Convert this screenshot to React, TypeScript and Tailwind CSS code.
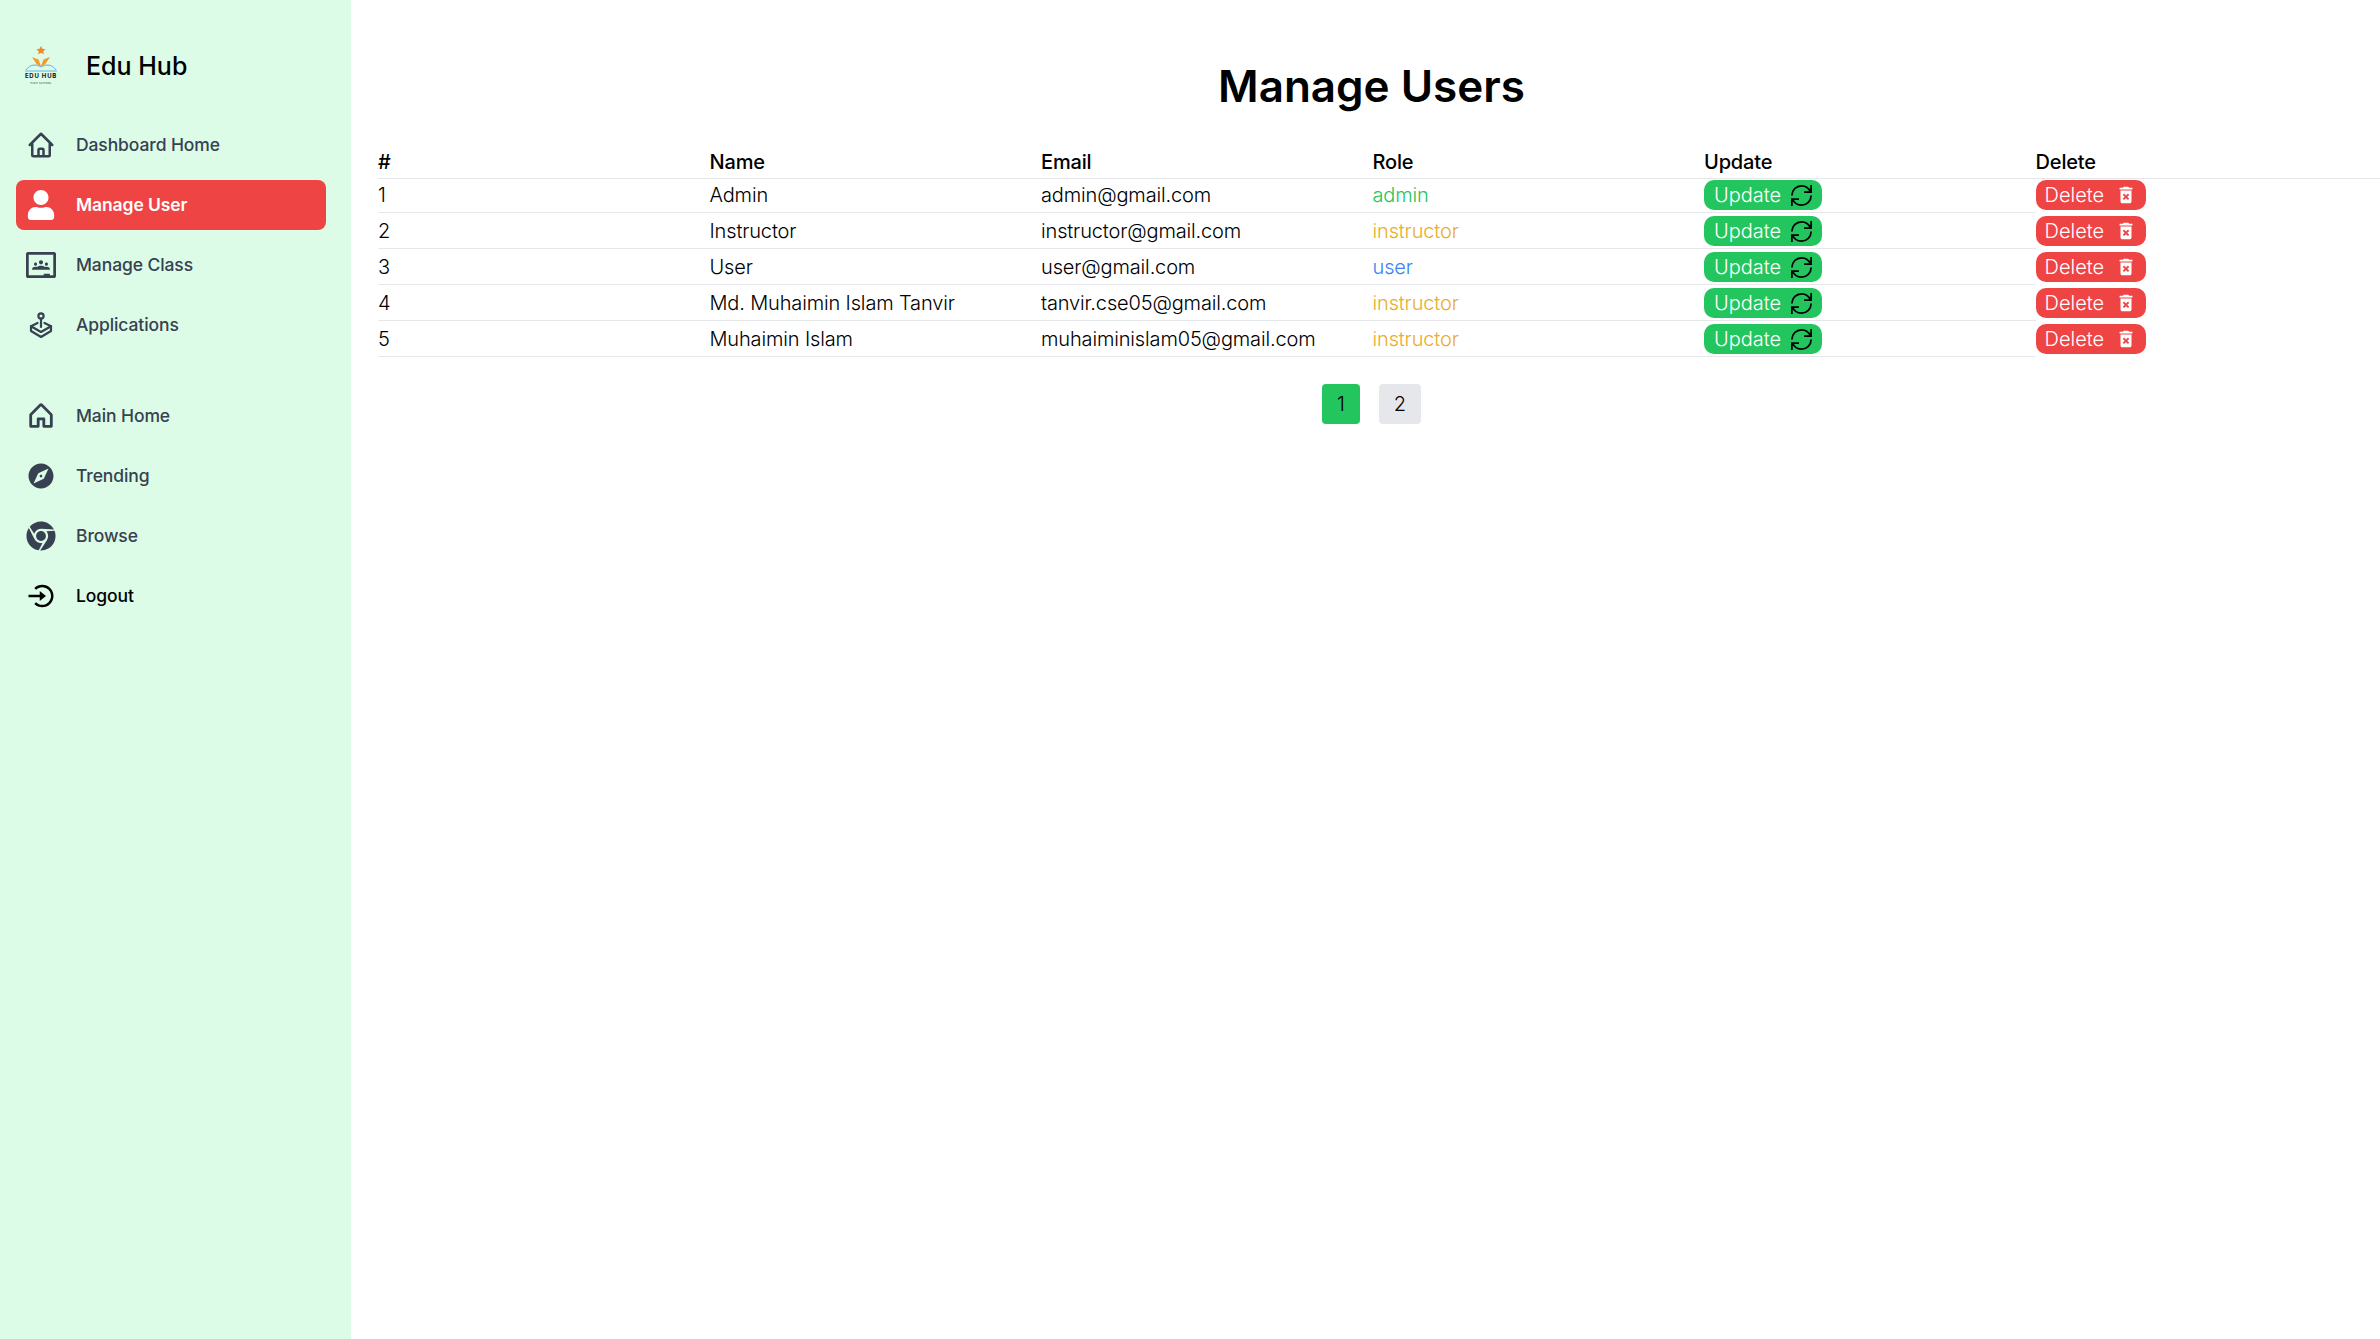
import { FaChrome, FaUser } from "react-icons/fa";
import { SiGoogleclassroom } from "react-icons/si";
import { PiHouseBold } from "react-icons/pi";
import { MdDeleteForever, MdExplore } from "react-icons/md";
import { HiOutlineHome } from "react-icons/hi";
import { BiLogInCircle } from "react-icons/bi";
import { GrUpdate } from "react-icons/gr";
import type { ReactNode } from "react";

const users = [
  { name: "Admin", email: "admin@gmail.com", role: "admin" },
  { name: "Instructor", email: "instructor@gmail.com", role: "instructor" },
  { name: "User", email: "user@gmail.com", role: "user" },
  { name: "Md. Muhaimin Islam Tanvir", email: "tanvir.cse05@gmail.com", role: "instructor" },
  { name: "Muhaimin Islam", email: "muhaiminislam05@gmail.com", role: "instructor" },
];

const roleColor: Record<string, string> = {
  admin: "text-[#22c55e]",
  instructor: "text-[#e9ad2b]",
  user: "text-[#3b82f6]",
};

function Logo() {
  return (
    <svg viewBox="0 0 38 40" className="w-[38px] h-[40px] shrink-0">
      <path d="M19 0l1.4 2.8 3.1.4-2.2 2.1.5 3-2.8-1.5-2.8 1.5.5-3-2.2-2.1 3.1-.4z" fill="#f08a24" />
      <path d="M10 11l6.5 2.5L19 20l2.5-6.5L28 11l-4.5 7-4.5 3-4.5-3z" fill="#f59a2e" />
      <path d="M4 24c4-6 10-6 15-3 5-3 11-3 15 3" fill="none" stroke="#5aa9e6" strokeWidth="0.9" />
      <path d="M6 21.5c4-3 9-3 13-1 4-2 9-2 13 1" fill="none" stroke="#8cc5ee" strokeWidth="0.6" />
      <path d="M3 25h32" stroke="#5aa9e6" strokeWidth="0.9" />
      <text x="19" y="31.5" textAnchor="middle" fontSize="6" fontWeight="700" letterSpacing="0.8" fill="#111" fontFamily="Inter, sans-serif">EDU HUB</text>
      <text x="19" y="37.5" textAnchor="middle" fontSize="2.6" fill="#333" letterSpacing="0.3" fontFamily="Inter, sans-serif">HIGH SCHOOL</text>
    </svg>
  );
}

// joystick on an isometric base, no package has this exact one
function Joystick() {
  return (
    <svg viewBox="0 0 30 30" className="w-[30px] h-[30px]" fill="none" stroke="currentColor" strokeWidth="2.2" strokeLinejoin="round" strokeLinecap="round">
      <circle cx="15" cy="6" r="2.6" />
      <path d="M15 8.6V17" />
      <path d="M11.5 13L5 16.2V21L15 27L25 21V16.2L18.5 13" />
      <path d="M5 16.2L15 22L25 16.2" />
    </svg>
  );
}

function NavItem({ icon, label, active, dark }: { icon: ReactNode; label: string; active?: boolean; dark?: boolean }) {
  return (
    <a
      className={`h-[50px] flex items-center gap-[20px] pl-[10px] rounded-[8px] text-[17.5px] font-medium tracking-[-0.1px] ${
        active ? "bg-[#ef4444] text-white font-semibold" : dark ? "text-black" : "text-[#374151]"
      }`}
    >
      <span className="w-[30px] flex justify-center items-center shrink-0">{icon}</span>
      <span className="pt-[1px]">{label}</span>
    </a>
  );
}

const cell = "p-0 align-bottom border-b border-[#e5e7eb] leading-[30px] pb-[2px]";

export default function App() {
  return (
    <div className="flex min-h-[1339px] bg-white font-['Inter',sans-serif] text-black">
      <aside className="w-[351px] shrink-0 bg-[#dcfce7] pl-[16px] pr-[25px]">
        <div className="h-[120px] flex items-start pt-[46px] pl-[6px] gap-[26px]">
          <Logo />
          <span className="text-[25px] leading-[40px] font-medium">Edu Hub</span>
        </div>
        <nav className="flex flex-col gap-[10px]">
          <NavItem icon={<HiOutlineHome size={30} />} label="Dashboard Home" />
          <NavItem icon={<FaUser size={30} />} label="Manage User" active />
          <NavItem icon={<SiGoogleclassroom size={30} />} label="Manage Class" />
          <NavItem icon={<Joystick />} label="Applications" />
          <div className="h-[21px]" />
          <NavItem icon={<PiHouseBold size={30} />} label="Main Home" />
          <NavItem icon={<MdExplore size={30} />} label="Trending" />
          <NavItem icon={<FaChrome size={30} />} label="Browse" />
          <NavItem icon={<BiLogInCircle size={30} />} label="Logout" dark />
        </nav>
      </aside>

      <main className="flex-1 pl-[12px]">
        <h1 className="pt-[52px] text-center text-[44px] leading-[68px] font-semibold">Manage Users</h1>
        <div className="pl-[15px] mt-[25px]">
          <table className="w-full table-fixed border-separate border-spacing-0 text-[20px] font-light tracking-[-0.15px]">
            <thead>
              <tr className="h-[34px] text-left">
                {["#", "Name", "Email", "Role", "Update", "Delete"].map((h, i) => (
                  <th key={h} className={`${i < 5 ? "w-[331.5px]" : ""} font-medium border-b border-[#e5e7eb] p-0`}>
                    {h}
                  </th>
                ))}
              </tr>
            </thead>
            <tbody>
              {users.map((u, i) => (
                <tr key={u.email} className={i === 0 ? "h-[34px]" : "h-[36px]"}>
                  <td className={cell}>{i + 1}</td>
                  <td className={cell}>{u.name}</td>
                  <td className={cell}>{u.email}</td>
                  <td className={`${cell} ${roleColor[u.role]}`}>{u.role}</td>
                  <td className={cell}>
                    <button className="h-[30px] w-[118px] flex items-center gap-[10px] pl-[10px] rounded-[10px] bg-[#22c55e] text-white leading-none tracking-normal">
                      Update <GrUpdate size={21} className="[&_path]:stroke-black" />
                    </button>
                  </td>
                  <td className="p-0 align-bottom pb-[3px]">
                    <button className="h-[30px] w-[110px] flex items-center gap-[11px] pl-[9px] rounded-[10px] bg-[#ef4444] text-white leading-none tracking-normal">
                      Delete <MdDeleteForever size={22} />
                    </button>
                  </td>
                </tr>
              ))}
            </tbody>
          </table>
        </div>
        <div className="mt-[27px] flex justify-center gap-[19px] text-[20px] font-light">
          <button className="h-[40px] w-[38px] rounded-[4px] bg-[#22c55e]">1</button>
          <button className="h-[40px] w-[42px] rounded-[4px] bg-[#e5e7eb]">2</button>
        </div>
      </main>
    </div>
  );
}
